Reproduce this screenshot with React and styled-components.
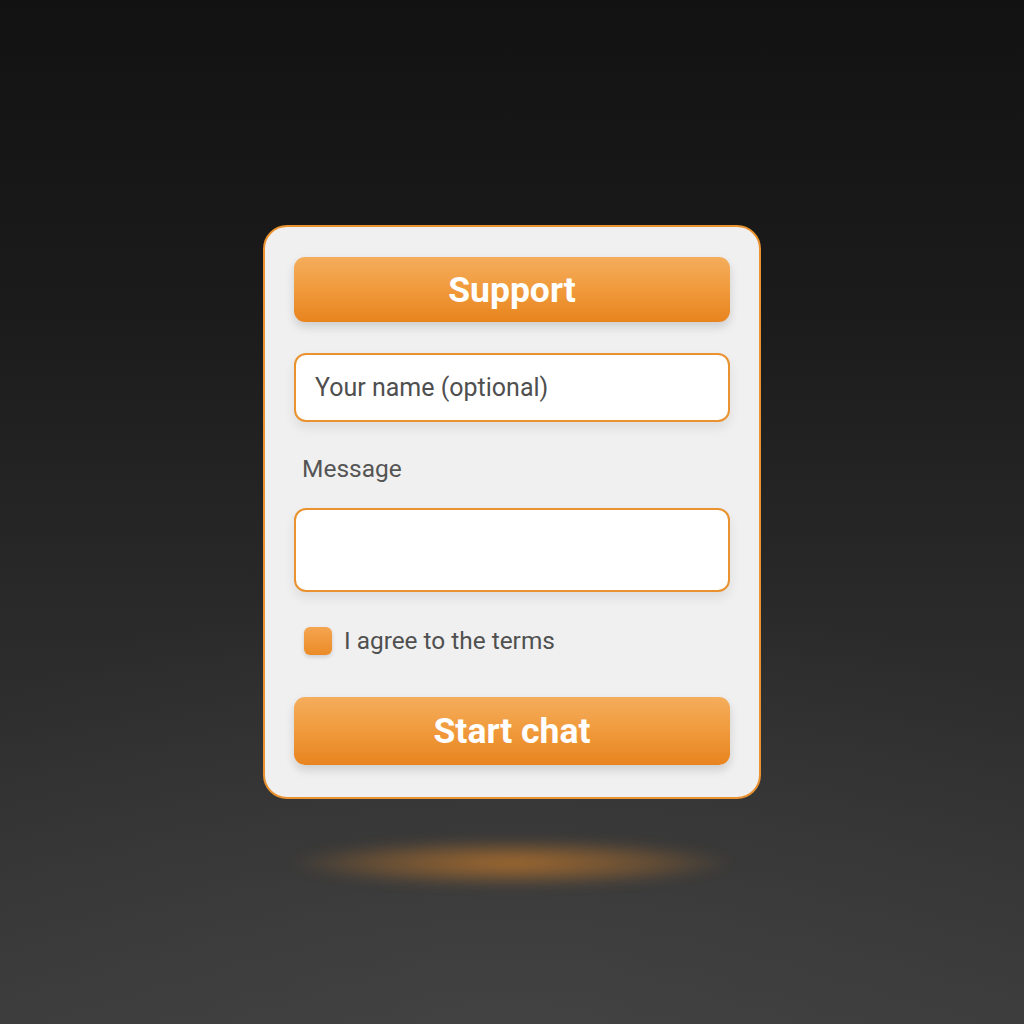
import React from 'react'
import styled, { createGlobalStyle } from 'styled-components'

const GlobalStyle = createGlobalStyle`
  html, body {
    margin: 0;
    padding: 0;
  }
  body {
    font-family: 'Roboto', 'Liberation Sans', sans-serif;
    background: #1a1a1a;
  }
`

const Page = styled.div`
  min-height: 1024px;
  display: flex;
  align-items: center;
  justify-content: center;
  background:
    radial-gradient(ellipse 70% 45% at 50% 100%, rgba(80, 80, 80, 0.35), rgba(80, 80, 80, 0) 100%),
    linear-gradient(180deg, #121212 0%, #1b1b1b 30%, #2c2c2c 65%, #3b3b3b 100%);
`

const Card = styled.form`
  position: relative;
  width: 436px;
  padding: 30px 29px 32px;
  background: #f0f0f0;
  border: 2px solid #e9922f;
  border-radius: 24px;
  display: flex;
  flex-direction: column;

  &::after {
    content: '';
    position: absolute;
    left: 50%;
    bottom: -90px;
    width: 440px;
    height: 48px;
    transform: translateX(-50%);
    border-radius: 50%;
    background: radial-gradient(ellipse at center, rgba(232, 138, 40, 0.6) 0%, rgba(232, 138, 40, 0.25) 45%, rgba(232, 138, 40, 0) 72%);
    filter: blur(6px);
    pointer-events: none;
  }
`

const OrangeBar = styled.button`
  display: flex;
  align-items: center;
  justify-content: center;
  width: 100%;
  height: ${p => p.$height}px;
  margin-top: ${p => p.$top || 0}px;
  border: none;
  border-radius: 11px;
  background: linear-gradient(180deg, #f5ad5c 0%, #f09a3c 50%, #e8841e 100%);
  box-shadow: 0 5px 10px rgba(0, 0, 0, 0.14);
  color: #ffffff;
  font-family: 'Roboto', 'Liberation Sans', sans-serif;
  font-weight: 700;
  font-size: 35.5px;
  cursor: pointer;
`

const Field = styled.div`
  box-sizing: border-box;
  width: 100%;
  height: ${p => p.$height}px;
  margin-top: ${p => p.$top || 0}px;
  padding: 0 19px;
  display: flex;
  align-items: center;
  background: #ffffff;
  border: 2px solid #e9922f;
  border-radius: 12px;
  box-shadow: 0 6px 12px rgba(0, 0, 0, 0.08);
  color: #4f4f4f;
  font-size: 25px;
`

const Label = styled.div`
  margin-top: 34px;
  padding-left: 8px;
  color: #555555;
  font-size: 24.5px;
  line-height: 26px;
`

const CheckRow = styled.label`
  display: flex;
  align-items: center;
  gap: 12px;
  margin-top: 35px;
  padding-left: 10px;
  color: #505050;
  font-size: 24.4px;
  line-height: 28px;
`

const Box = styled.span`
  width: 28px;
  height: 28px;
  border-radius: 6px;
  background: linear-gradient(180deg, #f5a551 0%, #eb8b27 100%);
  box-shadow: 0 2px 4px rgba(0, 0, 0, 0.15);
`

export default function App() {
  return (
    <>
      <GlobalStyle />
      <Page>
        <Card onSubmit={e => e.preventDefault()}>
          <OrangeBar type="button" $height={65}>Support</OrangeBar>
          <Field $height={69} $top={31}>Your name (optional)</Field>
          <Label>Message</Label>
          <Field $height={84} $top={26} />
          <CheckRow>
            <Box />
            I agree to the terms
          </CheckRow>
          <OrangeBar type="submit" $height={68} $top={42}>Start chat</OrangeBar>
        </Card>
      </Page>
    </>
  )
}
